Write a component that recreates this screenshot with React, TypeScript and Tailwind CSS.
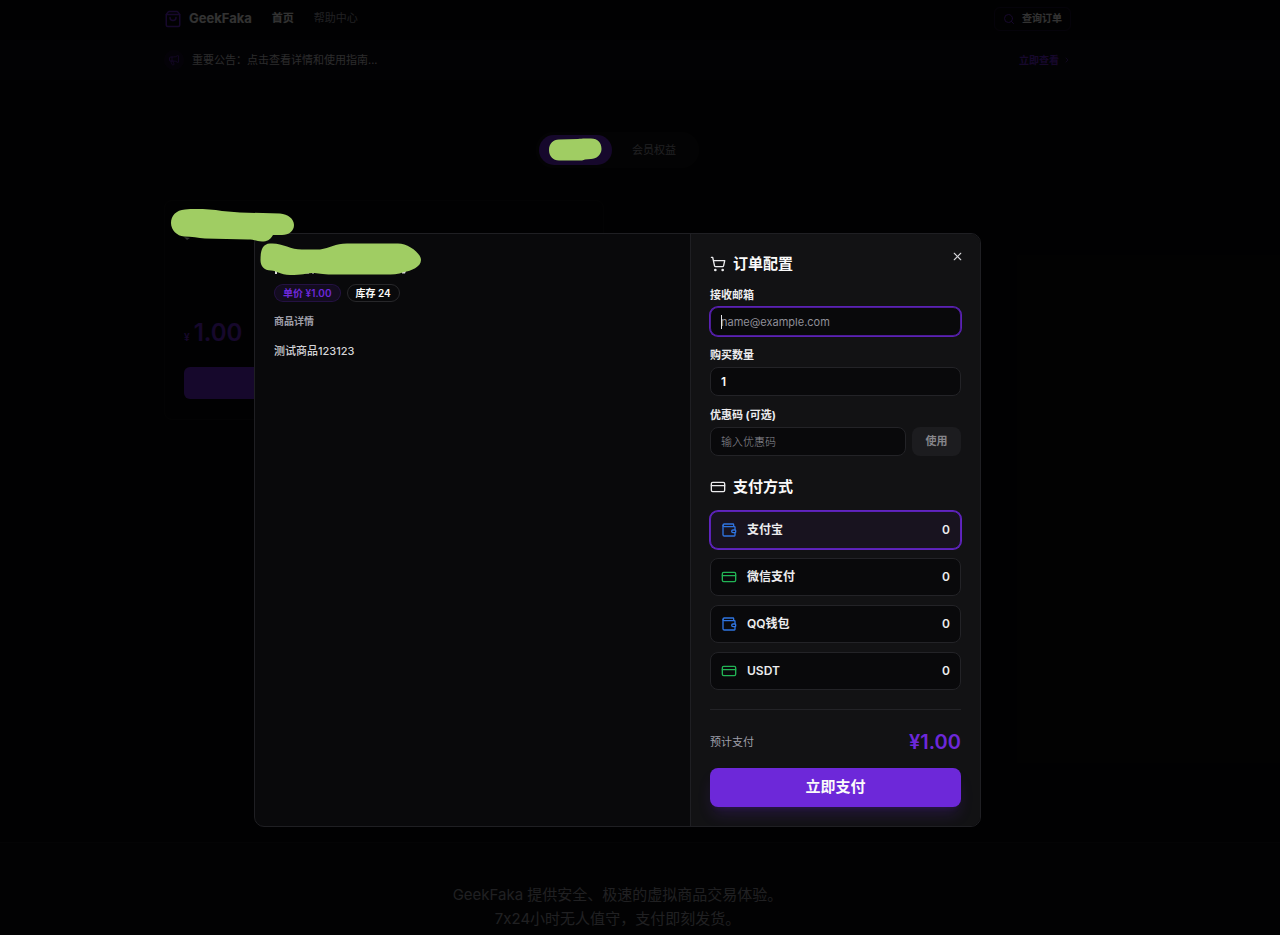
import { useState } from "react";
import {
  ChevronRight,
  CreditCard,
  Megaphone,
  Search,
  ShoppingBag,
  ShoppingCart,
  Wallet,
  X,
} from "lucide-react";

const methods = [
  { id: "alipay", name: "支付宝", icon: Wallet, color: "text-[#2f74e0]" },
  { id: "wechat", name: "微信支付", icon: CreditCard, color: "text-[#22b455]" },
  { id: "qq", name: "QQ钱包", icon: Wallet, color: "text-[#2f74e0]" },
  { id: "usdt", name: "USDT", icon: CreditCard, color: "text-[#22b455]" },
];

const inputClass =
  "h-[29px] w-full min-w-0 rounded-lg border px-[10px] bg-[#09090b] text-zinc-50 placeholder:text-[#8f8f98] outline-none";

function Header() {
  return (
    <header>
      <div className="h-10 pr-[45px]">
        <div className="mx-auto flex h-[37px] max-w-[907px] items-center">
          <ShoppingBag className="size-[18px] text-[#6d28d9]" />
          <span className="ml-[7px] text-[13px] font-bold">GeekFaka</span>
          <nav className="ml-5 flex gap-5 text-[11px]">
            <a href="#" className="font-bold">
              首页
            </a>
            <a href="#" className="text-zinc-400">
              帮助中心
            </a>
          </nav>
          <button className="ml-auto flex h-6 items-center gap-[7px] rounded-md border border-[#6d28d9]/20 px-2 text-[10px] font-bold">
            <Search className="size-3 text-[#6d28d9]" />
            查询订单
          </button>
        </div>
      </div>
      <div className="bg-[#6d28d9]/5 pr-[45px]">
        <div className="mx-auto flex h-10 max-w-[907px] items-center text-zinc-300">
          <span className="flex size-5 items-center justify-center rounded-full bg-[#6d28d9]/10">
            <Megaphone className="size-3 text-[#6d28d9]/70" />
          </span>
          <span className="ml-2 text-[11px]">
            重要公告：点击查看详情和使用指南...
          </span>
          <a
            href="#"
            className="ml-auto flex items-center gap-1 text-[10px] font-bold text-[#6d28d9]"
          >
            立即查看
            <ChevronRight className="size-2" />
          </a>
        </div>
      </div>
    </header>
  );
}

function Shop() {
  return (
    <main className="h-[762px] pr-[45px]">
      <div className="mx-auto max-w-[907px] pt-13">
        <div className="flex justify-center">
          <div className="flex h-9 items-center rounded-full bg-zinc-900/70 p-[3px] text-[11px]">
            <button
              aria-label="分类"
              className="flex h-[30px] w-[73px] items-center justify-center rounded-full bg-[#6d28d9]"
            />
            <button className="h-[30px] px-5 text-zinc-400">会员权益</button>
          </div>
        </div>
        <div className="mt-8 w-[440px] max-w-full rounded-lg border border-zinc-900/60 px-[19px] pt-[116px] pb-5">
          <div className="flex items-baseline gap-1 font-semibold text-[#6d28d9]">
            <span className="text-[10px]">¥</span>
            <span className="text-2xl">1.00</span>
          </div>
          <button className="mt-[18px] h-8 w-full rounded-md bg-[#6d28d9] text-xs font-bold">
            立即购买
          </button>
        </div>
      </div>
    </main>
  );
}

function ProductInfo() {
  return (
    <section className="px-[19px] pt-[50px]">
      <div className="flex gap-[6px] text-[10px] font-semibold">
        <span className="flex h-[18px] items-center rounded-full border border-[#6d28d9]/20 bg-[#6d28d9]/10 px-2 text-[#6d28d9]">
          单价 ¥1.00
        </span>
        <span className="flex h-[18px] items-center rounded-full border border-zinc-800 px-2 text-zinc-50">
          库存 24
        </span>
      </div>
      <h3 className="mt-[11px] text-[10px] leading-4 font-semibold text-zinc-400">
        商品详情
      </h3>
      <p className="mt-3 text-[11px] leading-5 font-medium text-zinc-300">
        测试商品123123
      </p>
    </section>
  );
}

function OrderForm({ onClose }: { onClose: () => void }) {
  const [email, setEmail] = useState("");
  const [quantity, setQuantity] = useState(1);
  const [coupon, setCoupon] = useState("");
  const [method, setMethod] = useState("alipay");

  return (
    <form
      className="border-l border-[#1f1f23] bg-[#121214] px-[19px] pt-5 pb-[19px] text-[#ececee]"
      onSubmit={(e) => e.preventDefault()}
    >
      <div className="flex h-5 items-center">
        <ShoppingCart className="size-4" />
        <h2 className="ml-[7px] text-[15px] font-bold text-zinc-50">订单配置</h2>
      </div>
      <button
        type="button"
        aria-label="关闭"
        onClick={onClose}
        className="absolute top-4 right-4 text-zinc-300"
      >
        <X className="size-[13px]" />
      </button>

      <div className="mt-[13px] flex flex-col gap-[11px]">
        <div>
          <label
            htmlFor="email"
            className="mb-1 block text-[11px] leading-4 font-bold"
          >
            接收邮箱
          </label>
          <div className="relative">
            <input
              id="email"
              type="email"
              placeholder="name@example.com"
              value={email}
              onChange={(e) => setEmail(e.target.value)}
              className={`${inputClass} border-[#4c1d95] text-[11px] ring-1 ring-[#5b21b6]`}
            />
            {!email && (
              <span className="absolute top-2 left-[11px] h-[14px] w-px bg-zinc-200" />
            )}
          </div>
        </div>
        <div>
          <label
            htmlFor="quantity"
            className="mb-1 block text-[11px] leading-4 font-bold"
          >
            购买数量
          </label>
          <input
            id="quantity"
            type="number"
            min={1}
            value={quantity}
            onChange={(e) => setQuantity(Number(e.target.value))}
            className={`${inputClass} border-[#232327] text-xs font-semibold`}
          />
        </div>
        <div>
          <label
            htmlFor="coupon"
            className="mb-1 block text-[11px] leading-4 font-bold"
          >
            优惠码 (可选)
          </label>
          <div className="flex gap-[6px]">
            <input
              id="coupon"
              type="text"
              placeholder="输入优惠码"
              value={coupon}
              onChange={(e) => setCoupon(e.target.value)}
              className={`${inputClass} border-[#232327] text-[11px] font-light`}
            />
            <button
              type="button"
              className="h-[29px] w-[49px] shrink-0 rounded-lg bg-[#1c1c1f] text-[11px] font-bold text-[#85858a]"
            >
              使用
            </button>
          </div>
        </div>
      </div>

      <div className="mt-[21px] flex h-5 items-center">
        <CreditCard className="size-4" />
        <h2 className="ml-[7px] text-[15px] font-bold text-zinc-50">支付方式</h2>
      </div>
      <div className="mt-[14px] flex flex-col gap-[9px]">
        {methods.map(({ id, name, icon: Icon, color }) => (
          <label
            key={id}
            className={`flex h-[38px] cursor-pointer items-center rounded-lg border px-[10px] text-xs font-semibold ${
              method === id
                ? "border-[#5b21b6] bg-[#18131f] ring-1 ring-[#6025c0]"
                : "border-[#232327] bg-[#09090b]"
            }`}
          >
            <input
              type="radio"
              name="method"
              value={id}
              checked={method === id}
              onChange={() => setMethod(id)}
              className="sr-only"
            />
            <Icon className={`size-4 ${color}`} />
            <span className="ml-[10px]">{name}</span>
            <span className="ml-auto">0</span>
          </label>
        ))}
      </div>

      <div className="mt-[19px] flex items-center justify-between border-t border-[#232327] pt-[18px]">
        <span className="text-[11px] text-zinc-400">预计支付</span>
        <span className="text-xl leading-7 font-semibold text-[#6d28d9]">
          ¥1.00
        </span>
      </div>
      <button
        type="submit"
        className="mt-3 h-[39px] w-full rounded-lg bg-[#6d28d9] text-[15px] font-bold text-zinc-50 shadow-lg shadow-[#6d28d9]/20"
      >
        立即支付
      </button>
    </form>
  );
}

// Marker strokes that hide the category, the card title and the product title
function Marker() {
  return (
    <svg
      className="pointer-events-none absolute top-0 left-0"
      width="440"
      height="290"
      viewBox="0 0 440 290"
    >
      <path d="M184 237l3 3 3-2z" fill="#333" />
      <path
        d="M185 209.500C195 208.500 210 209 222 211L240 212.500L280 213.500C288 214 294 219 294 225C294 231 289 235 282 235H273C270 240 267 241.500 262 241.500C257 241.500 255 239.500 248 239.500L205 238.500C198 238 192 236.500 184 236.500C177 236 171 230 171 223C171 216 176 210 185 209.500Z"
        fill="#a0cd63"
      />
      <path
        d="M275 270h2v4h-2zM305 272h4v1.500h-4zM312 272h2v1.500h-2zM402 271h4l-1 2.500h-3z"
        fill="#d8d8da"
      />
      <path
        d="M270 243.500C282 242.500 290 249.500 302 249.500H320C330 248 335 243.500 347 243.500H398C408 243.500 421 253 421 260C421 267 411 271 404 272C398 274.500 392 274.500 386 274.500H332C322 274.500 318 273 312 273C306 273.500 302 275 290 275C280 275 277 270.500 271 270.500C264 270.500 260.500 266 260.500 260C260.500 251 262 244 270 243.500Z"
        fill="#a0cd63"
      />
    </svg>
  );
}

export default function App() {
  const [open, setOpen] = useState(true);

  return (
    <div className="relative h-screen overflow-hidden bg-[#09090b] font-['Inter','Noto_Sans_CJK_SC',sans-serif] text-zinc-50 [font-feature-settings:'calt'_0]">
      <Header />
      <Shop />
      <footer className="border-t border-zinc-900 bg-zinc-900/30 pt-10 pr-[45px] pb-10 text-center text-[15px] leading-6 text-zinc-400">
        <p>GeekFaka 提供安全、极速的虚拟商品交易体验。</p>
        <p>7x24小时无人值守，支付即刻发货。</p>
      </footer>

      {open && (
        <div className="absolute inset-0 flex items-start justify-center bg-black/80 pt-[233px] pr-[45px]">
          <div
            role="dialog"
            aria-label="订单配置"
            className="relative grid w-full max-w-[727px] grid-cols-[3fr_2fr] overflow-hidden rounded-[10px] border border-[#1f1f23] bg-[#09090b]"
          >
            <ProductInfo />
            <OrderForm onClose={() => setOpen(false)} />
          </div>
        </div>
      )}

      <Marker />
      <svg
        className="pointer-events-none absolute top-[138px] left-[548px]"
        width="54"
        height="24"
        viewBox="0 0 54 24"
      >
        <path
          d="M11 1.500L30 1C34 0 40 .5 43 .5C50 .5 53.500 5 53.500 11C53.500 17 48 21 43 21L37 21.500C34 23 30 22.500 26 22.500H11C5 22.500 1 18 1 12C1 6 5 1.500 11 1.500Z"
          fill="#a0cd63"
        />
      </svg>
    </div>
  );
}
